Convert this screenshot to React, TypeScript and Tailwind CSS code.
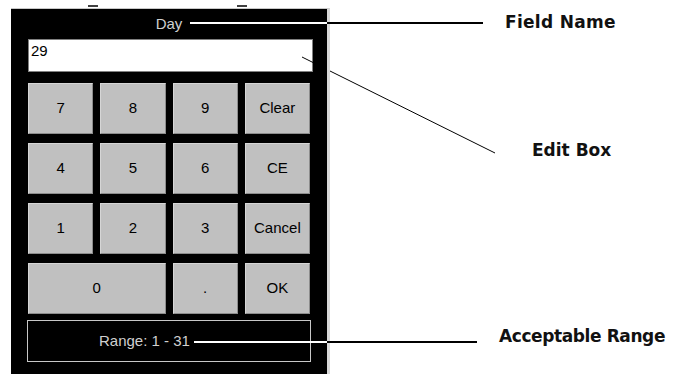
import React from 'react'

const keys: { label: string; wide?: boolean }[] = [
  { label: '7' }, { label: '8' }, { label: '9' }, { label: 'Clear' },
  { label: '4' }, { label: '5' }, { label: '6' }, { label: 'CE' },
  { label: '1' }, { label: '2' }, { label: '3' }, { label: 'Cancel' },
  { label: '0', wide: true }, { label: '.' }, { label: 'OK' },
]

function Key({ label, wide }: { label: string; wide?: boolean }) {
  return (
    <button
      className={`${wide ? 'col-span-2' : ''} flex items-center justify-center bg-[#c0c0c0] border-t border-l border-t-[#d6d6d6] border-l-[#d6d6d6] border-b border-r border-b-[#8c8c8c] border-r-[#8c8c8c] text-[15px] text-black`}
    >
      {label}
    </button>
  )
}

export default function App() {
  return (
    <div className="relative w-[673px] h-[375px] overflow-hidden bg-white font-['Liberation_Sans',Arial,sans-serif]">
      <div className="flex">
        {/* keypad window */}
        <div className="pl-[11px]">
          {/* remnants of the window above */}
          <div className="h-[8px] flex items-end pb-[1px]">
            <span className="ml-[77px] w-[10px] h-[2px] bg-[#404040]" />
            <span className="ml-[139px] w-[10px] h-[2px] bg-[#404040]" />
          </div>
          <div className="w-[319px] h-[366px] bg-black border-t border-t-[#c8c8c8] border-r-[3px] border-r-[#d8d8d8]">
            <div className="h-[30px] flex items-center justify-center text-[15px] text-[#d0d0d0]">Day</div>
            <div className="ml-[17px] w-[285px] h-[33px] bg-white border border-[#808080] pt-[2px] pl-[2px] text-[15px] leading-[17px] text-black">
              29
            </div>
            <div className="ml-[17px] mt-[11px] w-[282px] grid grid-cols-4 gap-x-[7px] gap-y-[9px] auto-rows-[51px]">
              {keys.map(k => (
                <Key key={k.label} label={k.label} wide={k.wide} />
              ))}
            </div>
            <div className="ml-[16px] mt-[6px] w-[284px] h-[42px] border border-[#c8c8c8] flex items-center pl-[71px] text-[15px] text-[#d0d0d0]">
              Range: 1 - 31
            </div>
          </div>
        </div>

        {/* callout labels */}
        <div className="flex flex-col font-['DejaVu_Sans',sans-serif] font-bold text-[17px] leading-[20px] text-[#111]">
          <span className="mt-[12px] ml-[175px] whitespace-nowrap tracking-[0.3px]">Field Name</span>
          <span className="mt-[108px] ml-[202px] whitespace-nowrap">Edit Box</span>
          <span className="mt-[166px] ml-[169px] whitespace-nowrap tracking-[-0.4px]">Acceptable Range</span>
        </div>
      </div>

      {/* leader lines */}
      <svg className="absolute top-0 left-0 pointer-events-none" width="673" height="375">
        <line x1="190" y1="23" x2="327" y2="23" stroke="#fff" strokeWidth="2" />
        <line x1="327" y1="23" x2="483" y2="23" stroke="#000" strokeWidth="2" />
        <line x1="302" y1="57" x2="313" y2="62.5" stroke="#000" strokeWidth="1" />
        <line x1="330" y1="71" x2="495" y2="153" stroke="#000" strokeWidth="1" />
        <line x1="194" y1="342" x2="327" y2="342" stroke="#fff" strokeWidth="2" />
        <line x1="327" y1="342" x2="477" y2="342" stroke="#000" strokeWidth="2" />
      </svg>
    </div>
  )
}
